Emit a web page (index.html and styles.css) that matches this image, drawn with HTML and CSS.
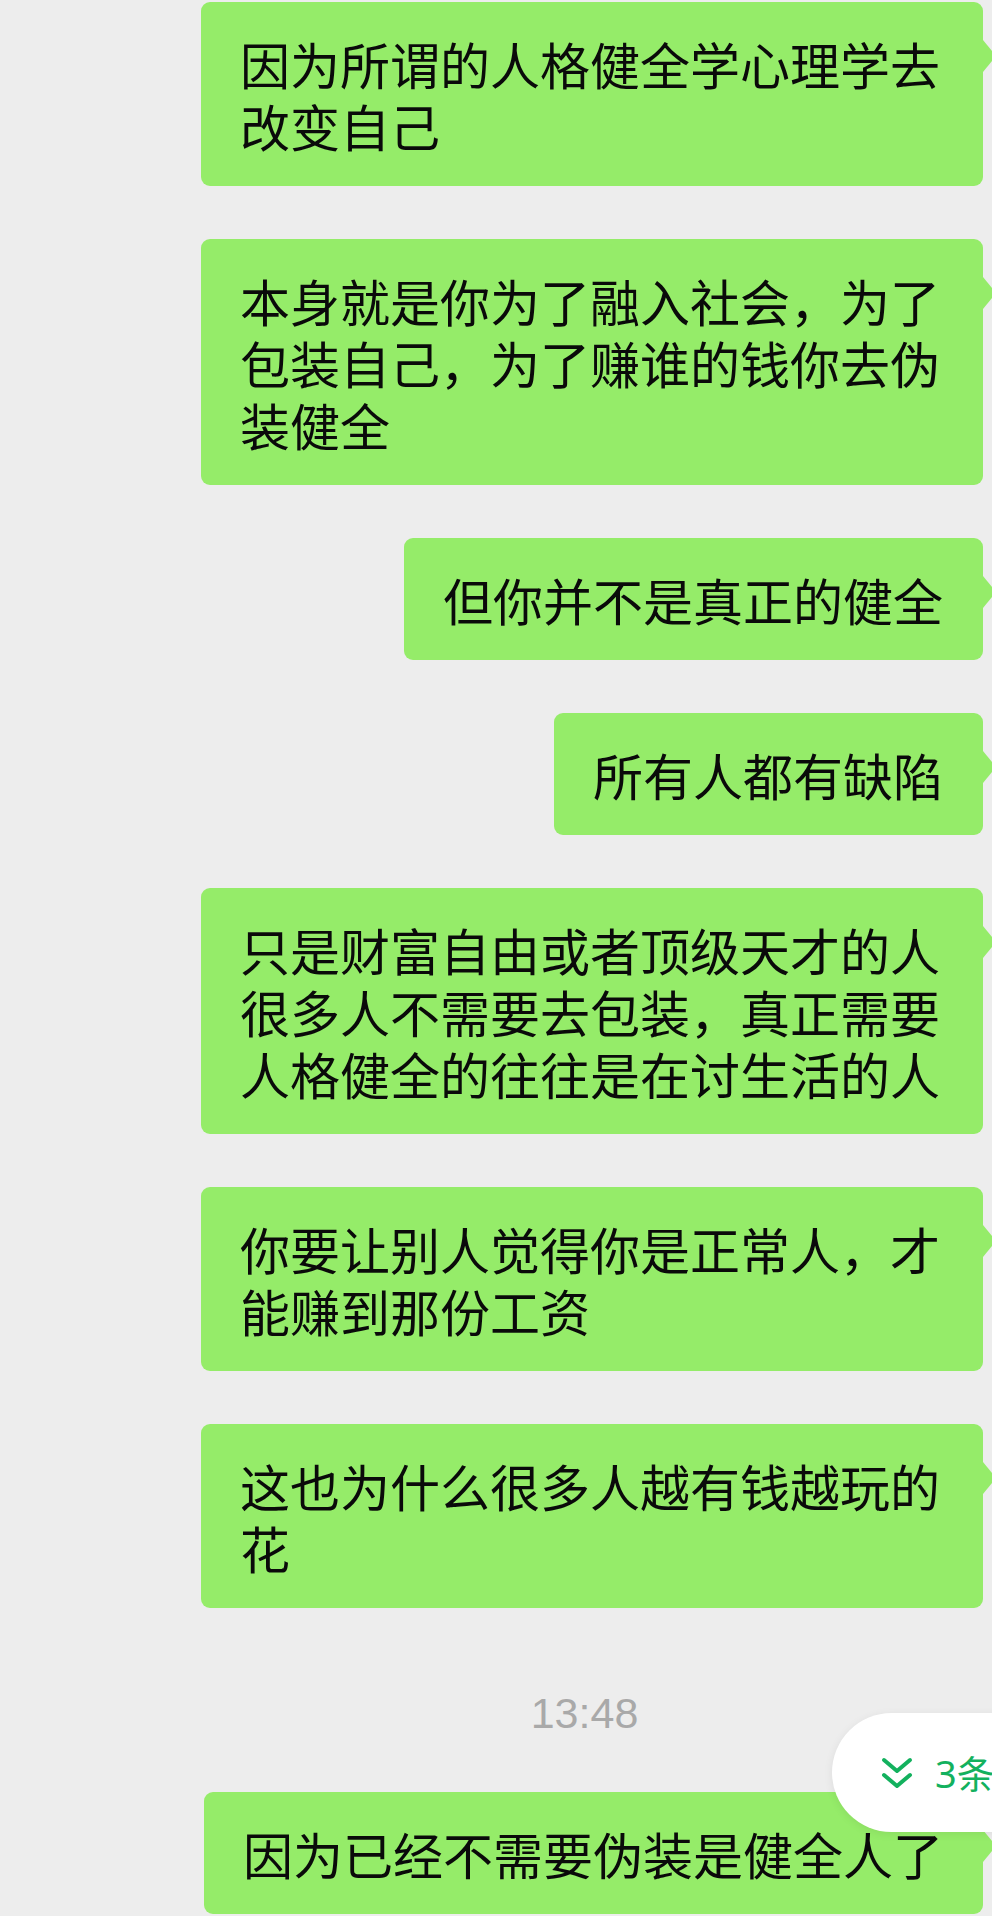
FILE: index.html
```html
<!DOCTYPE html>
<html lang="zh-CN">
<head>
<meta charset="utf-8">
<title>Chat</title>
<link rel="stylesheet" href="styles.css">
</head>
<body>
<div class="chat">
  <div class="bubble">因为所谓的人格健全学心理学去改变自己</div>
  <div class="bubble">本身就是你为了融入社会，为了包装自己，为了赚谁的钱你去伪装健全</div>
  <div class="bubble">但你并不是真正的健全</div>
  <div class="bubble">所有人都有缺陷</div>
  <div class="bubble">只是财富自由或者顶级天才的人很多人不需要去包装，真正需要人格健全的往往是在讨生活的人</div>
  <div class="bubble">你要让别人觉得你是正常人，才能赚到那份工资</div>
  <div class="bubble">这也为什么很多人越有钱越玩的花</div>
  <div class="time">13:48</div>
  <div class="bubble">因为已经不需要伪装是健全人了</div>
</div>
<div class="new-pill">
  <svg class="chev" viewBox="0 0 32 32" width="32" height="32" aria-hidden="true">
    <path d="M3 3 L16 14 L29 3" fill="none" stroke="currentColor" stroke-width="4" stroke-linecap="round" stroke-linejoin="round"/>
    <path d="M3 18 L16 29 L29 18" fill="none" stroke="currentColor" stroke-width="4" stroke-linecap="round" stroke-linejoin="round"/>
  </svg>
  <span class="count">3条</span>
</div>
</body>
</html>
```

FILE: styles.css
```css
html, body {
  margin: 0;
  padding: 0;
  width: 992px;
  height: 1916px;
  overflow: hidden;
  background: #ededed;
}

body {
  position: relative;
  font-family: "Noto Sans CJK SC", "Noto Sans", sans-serif;
  color: #0a0a0a;
}

.chat {
  display: flex;
  flex-direction: column;
  align-items: flex-end;
  gap: 53px;
  padding: 2px 9px 0 0;
}

.bubble {
  position: relative;
  background: #95ec69;
  border-radius: 9px;
  padding: 30px 40px 30px 39px;
  font-size: 50px;
  line-height: 62px;
  max-width: 703px;
  word-break: break-all;
}

.bubble::after {
  content: "";
  position: absolute;
  left: 100%;
  top: 38px;
  width: 0;
  height: 0;
  border-left: 13px solid #95ec69;
  border-top: 16px solid transparent;
  border-bottom: 16px solid transparent;
}

.time {
  align-self: stretch;
  padding-left: 186px;
  margin: 27px 0 1px;
  text-align: center;
  font-family: "Liberation Sans", "Noto Sans", sans-serif;
  font-size: 43px;
  line-height: 50px;
  color: #a9a9a9;
}

.new-pill {
  position: absolute;
  left: 832px;
  top: 1713px;
  width: 260px;
  height: 119px;
  border-radius: 60px;
  background: #ffffff;
  box-shadow: 0 2px 10px rgba(0, 0, 0, 0.07);
  display: flex;
  align-items: center;
  padding-left: 49px;
  box-sizing: border-box;
  color: #13b15e;
  white-space: nowrap;
}

.chev {
  display: block;
  flex: none;
}

.count {
  margin-left: 22px;
  font-family: "Noto Sans", "Noto Sans CJK SC", sans-serif;
  font-size: 38px;
  line-height: 40px;
}
```
